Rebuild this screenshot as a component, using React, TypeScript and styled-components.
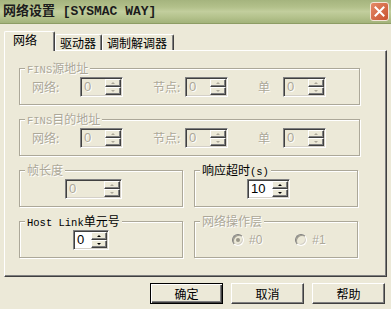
import React from 'react';
import styled, { createGlobalStyle } from 'styled-components';

const GlobalStyle = createGlobalStyle`
  html, body {
    margin: 0;
    padding: 0;
    background: #ece9d8;
    overflow: hidden;
  }
  * {
    box-sizing: border-box;
  }
`;

const DISABLED = '#aca899';

const Dialog = styled.div`
  width: 391px;
  height: 309px;
  background: #ece9d8;
  font-family: "Noto Sans CJK SC", "Liberation Sans", sans-serif;
  font-size: 12px;
  color: #000;
  display: flex;
  flex-direction: column;
`;

const TitleBar = styled.div`
  height: 24px;
  flex: none;
  display: flex;
  align-items: center;
  justify-content: space-between;
  padding: 0 2px 0 3px;
  background: linear-gradient(#a5b47e 0%, #b2c08a 30%, #c2ce9d 50%, #b4c28c 75%, #a3b37b 100%);
  border-bottom: 1px solid #8d9d64;
`;

const TitleText = styled.div`
  font-family: "Liberation Mono", "Noto Sans CJK SC", monospace;
  font-size: 13px;
  font-weight: bold;
  line-height: 16px;
  color: #1c1c1c;
  white-space: pre;
`;

const CloseButton = styled.div`
  width: 19px;
  height: 19px;
  border: 1px solid #f3e4d8;
  border-radius: 3px;
  background: linear-gradient(135deg, #e48a68, #c9522f);
  display: flex;
  align-items: center;
  justify-content: center;
`;

const TabStrip = styled.div`
  margin-top: 7px;
  height: 19px;
  padding-left: 4px;
  display: flex;
  align-items: flex-end;
  position: relative;
  z-index: 1;
`;

const Tab = styled.div<{ $active?: boolean; $w: number }>`
  width: ${p => p.$w}px;
  height: ${p => (p.$active ? 20 : 16)}px;
  margin-bottom: ${p => (p.$active ? -1 : 0)}px;
  padding: 1px 0 0 ${p => (p.$active ? 8 : 4)}px;
  line-height: 13px;
  background: #ece9d8;
  border-top: 1px solid #fff;
  border-left: 1px solid #fff;
  border-right: 1px solid #404040;
  border-radius: 2px 2px 0 0;
  box-shadow: inset -1px 0 0 #808080;
  white-space: nowrap;
`;

const Panel = styled.div`
  margin: 0 4px;
  height: 227px;
  border-top: 1px solid #fff;
  border-left: 1px solid #fff;
  border-right: 1px solid #404040;
  border-bottom: 1px solid #404040;
  box-shadow: inset -1px -1px 0 #808080;
  padding: 17px 0 0 14px;
  display: flex;
  flex-direction: column;
  gap: 14px;
`;

const GroupPair = styled.div`
  display: flex;
  gap: 11px;
`;

const Group = styled.div<{ $w: number; $pl: number }>`
  position: relative;
  width: ${p => p.$w}px;
  height: 37px;
  border: 1px solid ${DISABLED};
  box-shadow: inset 1px 1px 0 #fff, 1px 1px 0 #fff;
  padding: 8px 0 0 ${p => p.$pl}px;
  display: flex;
  align-items: flex-start;
`;

const Legend = styled.div<{ $disabled?: boolean }>`
  position: absolute;
  top: -7px;
  left: 5px;
  padding: 0 2px;
  background: #ece9d8;
  line-height: 12px;
  white-space: pre;
  color: ${p => (p.$disabled ? DISABLED : '#000')};
  text-shadow: ${p => (p.$disabled ? '1px 1px 0 #fff' : 'none')};
`;

// half-width latin in the legends, like the bitmap font of the original
const Latin = styled.span`
  font-family: "Liberation Mono", monospace;
  font-size: 10.5px;
`;

const FieldRow = styled.div`
  display: flex;
  gap: 30px;
`;

const Field = styled.div`
  display: flex;
  align-items: center;
`;

const FieldLabel = styled.span<{ $w: number }>`
  width: ${p => p.$w}px;
  line-height: 20px;
  color: ${DISABLED};
  text-shadow: 1px 1px 0 #fff;
  white-space: nowrap;
`;

const SpinBox = styled.div<{ $w: number; $disabled?: boolean }>`
  width: ${p => p.$w}px;
  height: 20px;
  display: flex;
  padding: 1px;
  border: 1px solid;
  border-color: #808080 #fff #fff #808080;
  box-shadow: inset 1px 1px 0 #404040, inset -1px -1px 0 #d4d0c8;
  background: ${p => (p.$disabled ? '#ece9d8' : '#fff')};
`;

const SpinValue = styled.div<{ $disabled?: boolean }>`
  flex: 1;
  padding-left: 2px;
  line-height: 16px;
  font-family: "Liberation Sans", "Noto Sans CJK SC", sans-serif;
  font-size: 13px;
  color: ${p => (p.$disabled ? DISABLED : '#000')};
  text-shadow: ${p => (p.$disabled ? '1px 1px 0 #fff' : 'none')};
`;

const SpinButtons = styled.div`
  width: 16px;
  display: flex;
  flex-direction: column;
`;

const SpinButton = styled.div`
  flex: 1;
  background: #ece9d8;
  border: 1px solid;
  border-color: #fff #404040 #404040 #fff;
  box-shadow: inset -1px -1px 0 #808080;
  display: flex;
  align-items: center;
  justify-content: center;
`;

const Arrow = styled.span<{ $down?: boolean; $disabled?: boolean }>`
  width: 0;
  height: 0;
  border-left: 2px solid transparent;
  border-right: 2px solid transparent;
  ${p => (p.$down ? 'border-top' : 'border-bottom')}: 2px solid ${p => (p.$disabled ? DISABLED : '#000')};
`;

const RadioRow = styled.div`
  display: flex;
  align-items: center;
  height: 20px;
  gap: 33px;
`;

const RadioItem = styled.div`
  display: flex;
  align-items: center;
  gap: 5px;
  color: ${DISABLED};
  text-shadow: 1px 1px 0 #fff;
  font-family: "Liberation Sans", sans-serif;
`;

const RadioCircle = styled.span<{ $checked?: boolean }>`
  width: 12px;
  height: 12px;
  border-radius: 50%;
  border: 1px solid;
  border-color: #808080 #fff #fff #808080;
  box-shadow: inset 1px 1px 0 #a09d90, inset -1px -1px 0 #d4d0c8;
  background: #ece9d8;
  display: flex;
  align-items: center;
  justify-content: center;
  &::after {
    content: '';
    width: 4px;
    height: 4px;
    border-radius: 50%;
    background: ${p => (p.$checked ? '#9a978a' : 'transparent')};
  }
`;

const Footer = styled.div`
  display: flex;
  justify-content: flex-end;
  gap: 8px;
  padding: 6px 6px 0 0;
`;

const Button = styled.button<{ $default?: boolean }>`
  width: 73px;
  height: 21px;
  padding: 0;
  margin: 0;
  font-family: "Noto Sans CJK SC", sans-serif;
  font-size: 12px;
  line-height: 19px;
  color: #000;
  background: #ece9d8;
  border: 1px solid;
  border-color: ${p => (p.$default ? '#000' : '#fff #404040 #404040 #fff')};
  box-shadow: ${p =>
    p.$default
      ? 'inset 1px 1px 0 #fff, inset -1px -1px 0 #404040, inset -2px -2px 0 #808080'
      : 'inset -1px -1px 0 #808080'};
`;

const Spin = ({ w, value, disabled }: { w: number; value: string; disabled?: boolean }) => (
  <SpinBox $w={w} $disabled={disabled}>
    <SpinValue $disabled={disabled}>{value}</SpinValue>
    <SpinButtons>
      <SpinButton>
        <Arrow $disabled={disabled} />
      </SpinButton>
      <SpinButton>
        <Arrow $down $disabled={disabled} />
      </SpinButton>
    </SpinButtons>
  </SpinBox>
);

const FinsGroup = ({ title }: { title: string }) => (
  <Group $w={341} $pl={12}>
    <Legend $disabled>
      <Latin>FINS</Latin>
      {title}
    </Legend>
    <FieldRow>
      <Field>
        <FieldLabel $w={48}>网络:</FieldLabel>
        <Spin w={43} value="0" disabled />
      </Field>
      <Field>
        <FieldLabel $w={32}>节点:</FieldLabel>
        <Spin w={43} value="0" disabled />
      </Field>
      <Field>
        <FieldLabel $w={25}>单</FieldLabel>
        <Spin w={43} value="0" disabled />
      </Field>
    </FieldRow>
  </Group>
);

export default function App() {
  return (
    <Dialog>
      <GlobalStyle />
      <TitleBar>
        <TitleText>网络设置 [SYSMAC WAY]</TitleText>
        <CloseButton>
          <svg width="11" height="11" viewBox="0 0 11 11">
            <path d="M1.5 1.5 L9.5 9.5 M9.5 1.5 L1.5 9.5" stroke="#fff" strokeWidth="2" strokeLinecap="square" />
          </svg>
        </CloseButton>
      </TitleBar>

      <TabStrip>
        <Tab $active $w={51}>网络</Tab>
        <Tab $w={47}>驱动器</Tab>
        <Tab $w={72}>调制解调器</Tab>
      </TabStrip>

      <Panel>
        <FinsGroup title="源地址" />
        <FinsGroup title="目的地址" />
        <GroupPair>
          <Group $w={164} $pl={45}>
            <Legend $disabled>帧长度</Legend>
            <Spin w={57} value="0" disabled />
          </Group>
          <Group $w={164} $pl={52}>
            <Legend>
              响应超时<Latin>(s)</Latin>
            </Legend>
            <Spin w={43} value="10" />
          </Group>
        </GroupPair>
        <GroupPair>
          <Group $w={164} $pl={53}>
            <Legend>
              <Latin>Host Link</Latin>单元号
            </Legend>
            <Spin w={36} value="0" />
          </Group>
          <Group $w={164} $pl={37}>
            <Legend $disabled>网络操作层</Legend>
            <RadioRow>
              <RadioItem>
                <RadioCircle $checked />
                #0
              </RadioItem>
              <RadioItem>
                <RadioCircle />
                #1
              </RadioItem>
            </RadioRow>
          </Group>
        </GroupPair>
      </Panel>

      <Footer>
        <Button $default>确定</Button>
        <Button>取消</Button>
        <Button>帮助</Button>
      </Footer>
    </Dialog>
  );
}
